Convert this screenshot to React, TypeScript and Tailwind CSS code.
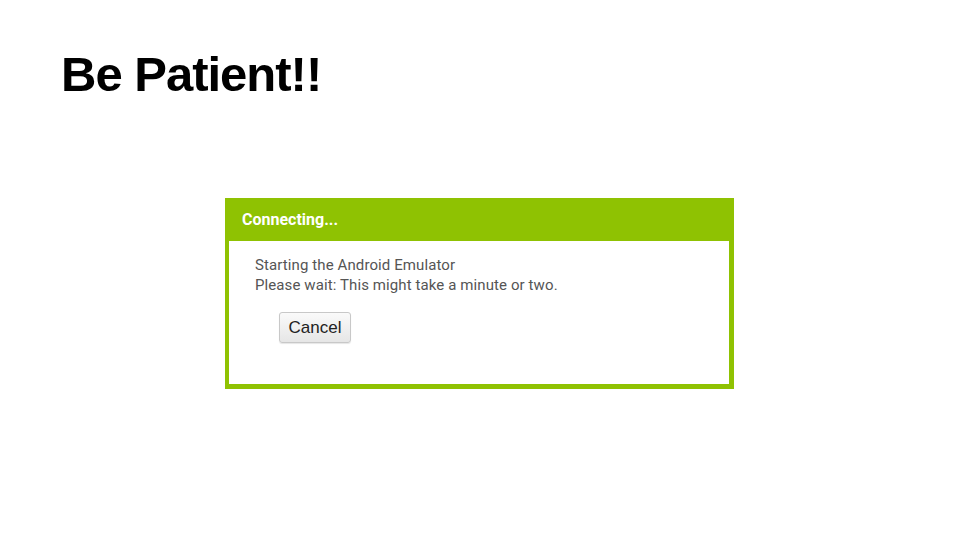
import React from "react";

export default function App() {
  return (
    <div className="w-[960px] h-[540px] bg-white relative overflow-hidden">
      <div className="pt-[45px] pl-[61px]">
        <h1 className="text-[49px] leading-[58px] font-bold text-black tracking-[-1px]" style={{ fontFamily: '"Liberation Sans", Arial, sans-serif' }}>
          Be Patient!!
        </h1>
      </div>
      <div className="mt-[95px] ml-[225px] w-[509px] h-[191px] bg-[#8fc202] pl-[4px] pr-[5px] pb-[5px] flex flex-col">
        <div className="h-[43px] flex items-center pl-[13px] text-white font-bold text-[16px]" style={{ fontFamily: 'Roboto, "Noto Sans", sans-serif' }}>
          Connecting...
        </div>
        <div className="flex-1 bg-white pl-[26px] pt-[14px]" style={{ fontFamily: 'Roboto, "Noto Sans", sans-serif' }}>
          <div className="text-[15px] leading-[20px] text-[#555555] tracking-[0.1px]">
            <div>Starting the Android Emulator</div>
            <div>Please wait: This might take a minute or two.</div>
          </div>
          <button
            className="mt-[17px] ml-[24px] w-[72px] h-[31px] rounded-[3px] border border-[#c8c8c8] bg-gradient-to-b from-[#fafafa] to-[#e6e6e6] text-[17px] leading-none text-[#222] shadow-[0_1px_1px_rgba(0,0,0,0.1)] flex items-center justify-center"
            style={{ fontFamily: '"Liberation Sans", Arial, sans-serif' }}
          >
            Cancel
          </button>
        </div>
      </div>
    </div>
  );
}
